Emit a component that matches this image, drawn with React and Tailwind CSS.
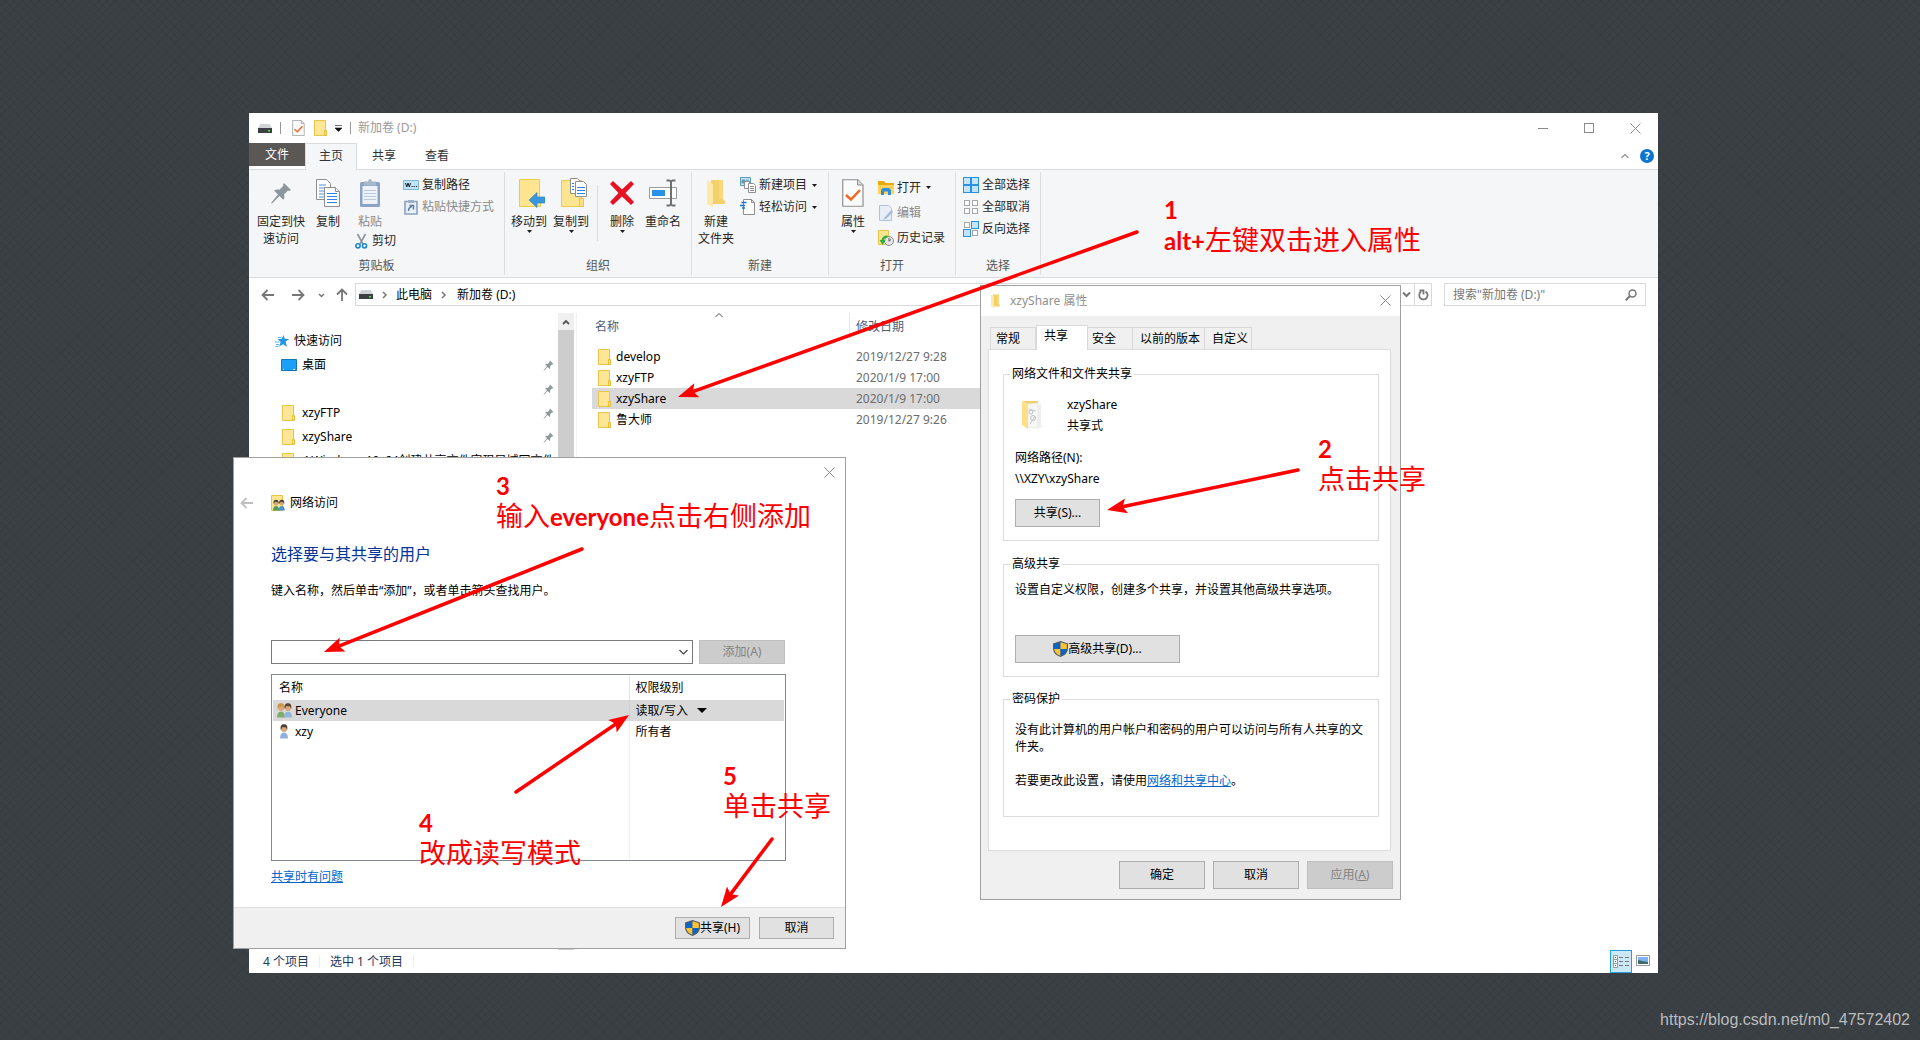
import React from "react";

/* ---------- icons ---------- */

const Folder = ({ size = 16 }) => (
  <svg width={size} height={size} viewBox="0 0 16 16" className="shrink-0">
    <path d="M1.5.5h11v11l1 .5v3.5h-12z" fill="#ffe694" stroke="#e8c54a" />
    <path d="M11.5 15.5v-5h2v5z" fill="#ffe08a" stroke="#e8bf3a" />
  </svg>
);

const OpenFolder = ({ className }) => (
  <svg viewBox="0 0 20 28" className={className}>
    <path d="M5 1h12v20l2 1v3H5z" fill="#f5cf6b" />
    <path d="M13 1h4v19h-4z" fill="#f9d87c" />
    <path d="M1 1l6 4v23l-6-3z" fill="#ffe9a6" />
  </svg>
);

const Drive = () => (
  <svg width="14" height="9" viewBox="0 0 14 9" className="shrink-0">
    <path d="M2.5 0h9L14 4H0z" fill="#cfd3d5" />
    <path d="M0 4h14v5H0z" fill="#3c4043" />
    <path d="M10 6h2v1.500h-2z" fill="#3ce64a" />
  </svg>
);

const CheckDoc = ({ className }) => (
  <svg viewBox="0 0 22 28" className={className}>
    <path d="M.75.75h15L21 6v21.250H.75z" fill="#fbfbfb" stroke="#8f8f8f" strokeWidth="1.200" />
    <path d="M15.500.750V6H21" fill="#ddd" stroke="#8f8f8f" />
    <path d="M4 16l5 4.500L18 11" fill="none" stroke="#f26522" strokeWidth="2.400" />
  </svg>
);

const Pin = ({ size = 22 }) => (
  <svg width={size} height={size} viewBox="0 0 22 22" className="shrink-0">
    <path d="M14 1l7 7-2 1-1-.5-4 4c.8 2 .5 4-.8 5.300L9.500 14 2 21.500 1 21l7-8.500L4 8.600c1.500-1.200 3.500-1.500 5.400-.8l4-4L13 2.800z" fill="#8c979d" />
  </svg>
);

const CopyIcon = () => (
  <svg width="26" height="30" viewBox="0 0 26 30">
    <path d="M1.500 1.500h10l4 4v16h-14z" fill="#fff" stroke="#8f8f8f" />
    <path d="M4 7h7M4 10h7M4 13h7M4 16h7M4 19h5" stroke="#4a90e2" />
    <path d="M9.500 9.500h11l4 4v15h-15z" fill="#fff" stroke="#8f8f8f" />
    <path d="M20.500 9.500v4h4" fill="#eee" stroke="#8f8f8f" />
    <path d="M12 15.500h10M12 18.500h10M12 21.500h10M12 24.500h10" stroke="#2f80ed" />
  </svg>
);

const PasteIcon = () => (
  <svg width="22" height="30" viewBox="0 0 22 30">
    <rect x="1" y="4" width="20" height="25" rx="1.500" fill="#8ba3c7" />
    <path d="M3.500 8h15v18h-15z" fill="#eef3fa" />
    <path d="M5 12.500h12M5 15.500h12M5 18.500h12M5 21.500h12" stroke="#b9c9df" />
    <path d="M5 3.500h4C9.300 0 12.700 0 13 3.500h4v4H5z" fill="#a9b8cc" />
  </svg>
);

const PathIcon = () => (
  <svg width="16" height="10" viewBox="0 0 16 10">
    <path d="M.5.5h15v9H.5z" fill="#bfe3f8" stroke="#7fb4d2" />
    <path d="M2.500 3l1.300 4L5 3l1.300 4L7.500 3" fill="none" stroke="#223" />
    <path d="M8.500 6.500h1.200M10.700 6.500h1.200M12.900 6.500h1.200" stroke="#223" />
  </svg>
);

const PasteLinkIcon = () => (
  <svg width="14" height="16" viewBox="0 0 14 16">
    <path d="M1 2.500h12V15H1z" fill="#e9f0f8" stroke="#8aa0bd" strokeWidth="1.600" />
    <path d="M4 1h6v3H4z" fill="#9db0c9" />
    <path d="M4.500 12c0-3 1-4 3.500-4.500M5.500 6.500h4v4" fill="none" stroke="#5c7ba6" strokeWidth="1.500" />
  </svg>
);

const CutIcon = () => (
  <svg width="13" height="16" viewBox="0 0 13 16">
    <path d="M2.500 1l5.500 10M10.500 1L5 11" stroke="#8a949c" strokeWidth="1.600" />
    <circle cx="3" cy="12.800" r="2.100" fill="none" stroke="#1e88c9" strokeWidth="1.600" />
    <circle cx="9.500" cy="12.800" r="2.100" fill="none" stroke="#1e88c9" strokeWidth="1.600" />
  </svg>
);

const MoveToIcon = () => (
  <svg width="32" height="30" viewBox="-5 0 32 30">
    <path d="M1.500 1.500h20v22l1 1v4h-21z" fill="#ffe58f" stroke="#ecc94f" />
    <path d="M11 22l8-7.500v4.500h8v6h-8v4.500z" fill="#3a96dd" stroke="#2b7fc2" strokeWidth=".6" />
  </svg>
);

const CopyToIcon = () => (
  <svg width="32" height="30" viewBox="-5 0 32 30">
    <path d="M1.500 2.500h20v20l2 1v5h-22z" fill="#ffe58f" stroke="#ecc94f" />
    <path d="M19.500 28.500v-8h4v8z" fill="#ffdf7c" stroke="#ecc04a" />
    <path d="M10.500.5h7l3 3v12h-10z" fill="#fff" stroke="#8f8f8f" />
    <path d="M15.500 3.500h8l3 3v12h-11z" fill="#fff" stroke="#8f8f8f" />
    <path d="M17 9.500h8M17 12.500h8M17 15.500h8M12 5.500h2M12 8.500h2M12 11.500h2" stroke="#2f80ed" />
  </svg>
);

const DeleteIcon = () => (
  <svg width="26" height="26" viewBox="0 0 26 26">
    <path d="M4 1l9 8.500L22 1l3 3-8.500 9L25 22l-3 3-9-8.500L4 25l-3-3 8.500-9L1 4z" fill="#e81123" />
  </svg>
);

const RenameIcon = () => (
  <svg width="30" height="28" viewBox="0 0 30 28">
    <path d="M1.500 8.500h27v11h-27z" fill="#fff" stroke="#9a9a9a" />
    <path d="M4 11h13v6H4z" fill="#2b90e8" />
    <path d="M18.500 1.500h3l1.500 1 1.500-1h3M23 2v24M18.500 26.500h3l1.500-1 1.500 1h3" fill="none" stroke="#707070" strokeWidth="2" />
  </svg>
);

const NewItemIcon = () => (
  <svg width="16" height="16" viewBox="0 0 16 16">
    <path d="M.5.5h10v8H.5z" fill="#c5e6f5" stroke="#5c9ab8" />
    <path d="M2 3h3v3H2zM6 3h3" fill="#5c9ab8" stroke="#5c9ab8" />
    <path d="M4.500 4.500h5v7h-5z" fill="#fff" stroke="#8f8f8f" />
    <path d="M8.500 6.500h5l2 2v7h-7z" fill="#fff" stroke="#8f8f8f" />
    <path d="M10 9.500h4M10 11.500h4M10 13.500h4" stroke="#8f8f8f" />
  </svg>
);

const EasyAccessIcon = () => (
  <svg width="16" height="16" viewBox="0 0 16 16">
    <path d="M3.500.5h8l3 3v12h-11z" fill="#fff" stroke="#8f8f8f" />
    <path d="M11.500.5v3h3" fill="none" stroke="#8f8f8f" />
    <path d="M1.500 3.500h5M0 6.500h5M2 9h3" stroke="#1d6fb8" strokeWidth="1.300" />
  </svg>
);

const OpenIcon = () => (
  <svg width="16" height="14" viewBox="0 0 16 14">
    <path d="M0 0h6l1.500 2H16v11H0z" fill="#e8a90c" />
    <path d="M0 4h16v9H0z" fill="#ffd35a" />
    <path d="M3 14V9l2-2h6l2 2v5h-3v-3.500H6V14z" fill="#2f8fdd" />
  </svg>
);

const EditIcon = () => (
  <svg width="14" height="16" viewBox="0 0 14 16">
    <path d="M.5.5h9l3 3v12H.5z" fill="#e8eef8" stroke="#b2c1dc" />
    <path d="M12.500 5L6 12l-2 3 3.500-1.500L14 7z" fill="#a8b9d8" />
  </svg>
);

const HistoryIcon = () => (
  <svg width="16" height="16" viewBox="0 0 16 16">
    <path d="M.5.5h10v14H.5z" fill="#ffe58f" stroke="#e8c54a" />
    <circle cx="11" cy="11" r="4.500" fill="#e6e6e6" stroke="#8b8b8b" />
    <path d="M11 8v3.200l2-1.700" fill="none" stroke="#555" />
    <path d="M9.500 6.500C6 6.500 4.500 8.500 4.500 11" fill="none" stroke="#2fae3c" strokeWidth="2" />
    <path d="M1.500 10h6l-3 5z" fill="#2fae3c" />
  </svg>
);

const SelectIcon = ({ on }) => (
  <svg width="16" height="16" viewBox="0 0 16 16">
    {[[0.5, 0.5], [8.5, 0.5], [0.5, 8.5], [8.5, 8.5]].map(([x, y], i) =>
      on[i] ? (
        <rect key={i} x={x} y={y} width="7" height="7" fill="#c3e4fb" stroke="#2b90e0" />
      ) : (
        <rect key={i} x={x + 1} y={y + 1} width="5" height="5" fill="#fff" stroke="#a6a6a6" />
      )
    )}
  </svg>
);

const Star = () => (
  <svg width="14" height="14" viewBox="0 0 14 14" className="shrink-0">
    <path d="M8.500 1l1.200 3.800 4.300.2-3.400 2.700 1.400 5L8 10.200l-4 2.400 1.700-4.500L2.500 5.200l4.300-.4z" fill="#2196e3" />
    <path d="M3 3.500h3M0 8h4.500M1 10.500h3M.5 12.500h3" stroke="#56b4ef" />
  </svg>
);

const Desktop = () => (
  <svg width="16" height="12" viewBox="0 0 16 12" className="shrink-0">
    <path d="M.5.5h15v11H.5z" fill="#1aa0fb" stroke="#1273b5" />
    <path d="M2 10.500h1M12 10.500h2" stroke="#fff" />
  </svg>
);

const Shield = () => (
  <svg width="15" height="16" viewBox="0 0 15 16" className="shrink-0">
    <path d="M7.500 0L15 2.500V7c0 4.500-3 7.500-7.500 9C3 14.500 0 11.500 0 7V2.500z" fill="#555c63" />
    <path d="M7.500 1.300V8H1.200V3.300z" fill="#0b66c3" />
    <path d="M7.500 1.300V8h6.300V3.300z" fill="#ffc233" />
    <path d="M7.500 8v6.800C4 13.500 1.500 11.500 1.200 8z" fill="#ffc233" />
    <path d="M7.500 8v6.800C11 13.500 13.500 11.500 13.800 8z" fill="#0b66c3" />
  </svg>
);

const Person = ({ x = 0, hair, body }) => (
  <g transform={`translate(${x} 0)`}>
    <path d="M0 14.500c0-4 1.500-6 4-6s4 2 4 6z" fill={body} />
    <circle cx="4" cy="5" r="3" fill="#dba67a" />
    <path d="M.8 6C0 2 1.500.3 4 .3S8 2 7.200 6L6 3.500 2.500 3z" fill={hair} />
  </g>
);

const Users = () => (
  <svg width="16" height="15" viewBox="0 0 16 15" className="shrink-0">
    <Person hair="#c9963c" body="#7fae6a" />
    <Person x={7} hair="#5d4630" body="#8fb7e0" />
  </svg>
);

const User = () => (
  <svg width="8" height="15" viewBox="0 0 8 15" className="shrink-0">
    <Person hair="#4b3f36" body="#8fb0da" />
  </svg>
);

const ShareFolder = () => (
  <svg width="14" height="16" viewBox="0 0 14 16" className="shrink-0">
    <path d="M.5.500h11v15H.5z" fill="#ffe58f" stroke="#e8c54a" />
    <g transform="translate(2 4.500) scale(.76)">
      <Person hair="#3f4a44" body="#4f9a5e" />
      <Person x={7.500} hair="#4b3f36" body="#4a90d9" />
    </g>
  </svg>
);

const BigShareFolder = () => (
  <svg width="24" height="30" viewBox="0 0 24 30" className="shrink-0">
    <path d="M1 1h16v4h-9z" fill="#f3cf6e" />
    <path d="M6 4l11-1v25l-11-1z" fill="#f7f7f5" stroke="#e0e0de" strokeWidth=".6" />
    <path d="M16 5l4-1v22l3 1-7 1z" fill="#eeeeec" />
    <circle cx="10" cy="12" r="2" fill="none" stroke="#b7c0c8" />
    <circle cx="12" cy="18" r="2.500" fill="none" stroke="#b7c0c8" />
    <path d="M8 9l7 2M9 24l5-8" stroke="#c3cad0" />
    <path d="M1 1l6 4v24l-6-4z" fill="#ffdf85" />
  </svg>
);

const Caret = ({ className = "" }) => (
  <svg width="5" height="3" viewBox="0 0 5 3" className={className}>
    <path d="M0 0h5L2.500 3z" fill="#1a1a1a" />
  </svg>
);

const Chevron = ({ d, w = 8, h = 8, color = "#777", sw = 1.5 }) => (
  <svg width={w} height={h} viewBox={`0 0 ${w} ${h}`} className="shrink-0">
    <path d={d} fill="none" stroke={color} strokeWidth={sw} />
  </svg>
);

const BackArrow = ({ color = "#777", flip = "" }) => (
  <svg width="14" height="12" viewBox="0 0 14 12" className={flip}>
    <path d="M13 6H1.500M6.500 1l-5 5 5 5" fill="none" stroke={color} strokeWidth="1.800" />
  </svg>
);

const Cross = () => (
  <svg width="11" height="11" viewBox="0 0 11 11">
    <path d="M.5.5l10 10M10.500.5l-10 10" stroke="#8a8a8a" />
  </svg>
);

/* ---------- ribbon ---------- */

const BigButton = ({ icon, lines, caret, className = "" }) => (
  <button className={`flex flex-col items-center leading-[17px] ${className}`}>
    <span className="mb-1 flex h-8 items-center justify-center">{icon}</span>
    {lines.map((line) => (
      <span key={line}>{line}</span>
    ))}
    {caret && <Caret />}
  </button>
);

const SmallButton = ({ icon, text, caret, className = "h-[22px]" }) => (
  <button className={`flex items-center gap-[3px] whitespace-nowrap ${className}`}>
    <span className="flex w-4 justify-center">{icon}</span>
    {text}
    {caret && <Caret className="ml-[2px]" />}
  </button>
);

const Group = ({ label, className, children }) => (
  <div className={`my-[2px] flex shrink-0 flex-col border-r border-[#dcdddf] ${className}`}>
    <div className="flex flex-1 items-start pt-[5px] pl-1">{children}</div>
    <div className="h-[18px] text-center leading-[18px] text-[#555]">{label}</div>
  </div>
);

const Ribbon = () => (
  <div className="flex h-[109px] border-y border-[#dadbdc] bg-[#f5f6f7] text-[#262626]">
    <Group label="剪贴板" className="w-64">
      <BigButton icon={<Pin />} lines={["固定到快", "速访问"]} className="w-14" />
      <BigButton icon={<CopyIcon />} lines={["复制"]} className="w-[38px]" />
      <div className="flex w-[52px] flex-col items-start">
        <BigButton icon={<PasteIcon />} lines={["粘贴"]} className="w-[46px] text-[#8a8a8a]" />
        <SmallButton icon={<CutIcon />} text="剪切" className="ml-[6px] h-[22px]" />
      </div>
      <div className="-mt-[3px] pl-1">
        <SmallButton icon={<PathIcon />} text="复制路径" />
        <SmallButton icon={<PasteLinkIcon />} text="粘贴快捷方式" className="h-[22px] text-[#8a8a8a]" />
      </div>
    </Group>
    <Group label="组织" className="w-[187px]">
      <BigButton icon={<MoveToIcon />} lines={["移动到"]} caret className="w-[40px]" />
      <BigButton icon={<CopyToIcon />} lines={["复制到"]} caret className="w-[44px]" />
      <div className="mx-1 mt-2 h-14 w-px bg-[#dcdddf]" />
      <BigButton icon={<DeleteIcon />} lines={["删除"]} caret className="w-[40px]" />
      <BigButton icon={<RenameIcon />} lines={["重命名"]} className="w-[42px]" />
    </Group>
    <Group label="新建" className="w-[137px]">
      <BigButton icon={<OpenFolder className="h-7 w-5" />} lines={["新建", "文件夹"]} className="w-[40px]" />
      <div className="-mt-[3px] pl-1">
        <SmallButton icon={<NewItemIcon />} text="新建项目" caret />
        <SmallButton icon={<EasyAccessIcon />} text="轻松访问" caret />
      </div>
    </Group>
    <Group label="打开" className="w-[127px]">
      <BigButton icon={<CheckDoc className="h-7 w-[22px]" />} lines={["属性"]} caret className="w-10" />
      <div className="-mt-[2px] pl-[5px]">
        <SmallButton icon={<OpenIcon />} text="打开" caret className="h-[25px]" />
        <SmallButton icon={<EditIcon />} text="编辑" className="h-[25px] text-[#8a8a8a]" />
        <SmallButton icon={<HistoryIcon />} text="历史记录" className="h-[25px]" />
      </div>
    </Group>
    <Group label="选择" className="w-[85px]">
      <div className="-mt-[3px] pl-[3px]">
        <SmallButton icon={<SelectIcon on={[1, 1, 1, 1]} />} text="全部选择" />
        <SmallButton icon={<SelectIcon on={[0, 0, 0, 0]} />} text="全部取消" />
        <SmallButton icon={<SelectIcon on={[0, 1, 1, 0]} />} text="反向选择" />
      </div>
    </Group>
  </div>
);

/* ---------- explorer window ---------- */

const files = [
  { name: "develop", date: "2019/12/27 9:28" },
  { name: "xzyFTP", date: "2020/1/9 17:00" },
  { name: "xzyShare", date: "2020/1/9 17:00", selected: true },
  { name: "鲁大师", date: "2019/12/27 9:26" },
];

const quickAccess = [
  { name: "桌面", icon: <Desktop />, pinned: true },
  { name: "", icon: null, pinned: true },
  { name: "xzyFTP", icon: <Folder />, pinned: true },
  { name: "xzyShare", icon: <Folder />, pinned: true },
  { name: "4.Windows 10_64创建共享文件实现局域网文件", icon: <Folder /> },
];

const TitleBar = () => (
  <div className="flex h-[30px] items-center pl-[9px]">
    <Drive />
    <span className="ml-2 h-3 w-px bg-[#999]" />
    <span className="ml-[11px]"><CheckDoc className="h-4 w-[13px]" /></span>
    <span className="ml-2"><Folder /></span>
    <svg width="7" height="7" viewBox="0 0 7 7" className="ml-[6px]">
      <path d="M0 .5h7M0 3h7L3.500 6.500z" fill="#111" stroke="#111" strokeWidth=".6" />
    </svg>
    <span className="ml-2 h-3 w-px bg-[#999]" />
    <span className="ml-[7px] text-[#999]">新加卷 (D:)</span>
    <div className="ml-auto flex">
      <button aria-label="最小化" className="flex h-7 w-[46px] items-center justify-center">
        <span className="h-px w-[10px] bg-[#8a8a8a]" />
      </button>
      <button aria-label="最大化" className="flex h-7 w-[46px] items-center justify-center">
        <span className="size-[10px] border border-[#8a8a8a]" />
      </button>
      <button aria-label="关闭" className="flex h-7 w-[46px] items-center justify-center"><Cross /></button>
    </div>
  </div>
);

const MenuTabs = () => (
  <div className="-mb-px flex h-[27px] items-start text-[#333]">
    <button className="h-[23px] w-14 bg-[#5a5755] text-white">文件</button>
    <button className="relative h-[27px] w-[52px] border border-b-0 border-[#dadbdc] bg-[#f5f6f7] pb-[2px]">主页</button>
    <button className="h-[25px] w-[54px]">共享</button>
    <button className="h-[25px] w-[52px]">查看</button>
    <div className="ml-auto flex h-[25px] items-center gap-[11px] pr-1">
      <Chevron d="M.5 5l3.500-3.500L7.500 5" h={6} color="#999" sw={1.3} />
      <button aria-label="帮助" className="size-[14px] rounded-full bg-[#0b74d1] text-center text-[11px] leading-[14px] font-bold text-white">?</button>
    </div>
  </div>
);

const AddressBar = () => (
  <div className="flex h-[35px] items-start pt-[5px] pr-3">
    <div className="flex h-6 items-center pl-3">
      <button aria-label="后退"><BackArrow /></button>
      <button aria-label="前进" className="ml-4"><BackArrow flip="rotate-180" /></button>
      <button aria-label="最近" className="ml-[13px]"><Chevron d="M1 1l2.500 2.500L6 1" w={7} h={5} /></button>
      <button aria-label="向上" className="ml-[10px]"><BackArrow flip="rotate-90" /></button>
    </div>
    <div className="ml-[6px] flex h-[23px] flex-1 items-center border border-[#d9d9d9] pl-[3px]">
      <Drive />
      <span className="ml-2"><Chevron d="M2 1l3 3-3 3" /></span>
      <span className="ml-[7px]">此电脑</span>
      <span className="ml-2"><Chevron d="M2 1l3 3-3 3" /></span>
      <span className="ml-[9px]">新加卷 (D:)</span>
      <button aria-label="展开" className="mr-[3px] ml-auto"><Chevron d="M1 1.500L4.500 5 8 1.500" w={9} h={7} sw={2} /></button>
      <button aria-label="刷新" className="flex h-full w-[17px] items-center justify-center border-l border-[#d9d9d9]">
        <svg width="11" height="12" viewBox="0 0 11 12">
          <path d="M7.500 2.600A4.200 4.200 0 1 1 3 2.800M1.500 1.500h4v4" fill="none" stroke="#777" strokeWidth="1.800" />
        </svg>
      </button>
    </div>
    <label className="ml-3 flex h-[23px] w-[202px] items-center border border-[#d9d9d9] px-2">
      <input aria-label="搜索" placeholder={'搜索"新加卷 (D:)"'} className="min-w-0 flex-1 outline-none placeholder:text-[#767676]" />
      <svg width="12" height="12" viewBox="0 0 12 12">
        <circle cx="7.500" cy="4.500" r="3.500" fill="none" stroke="#777" strokeWidth="1.500" />
        <path d="M5 7L.7 11.300" stroke="#777" strokeWidth="2" />
      </svg>
    </label>
  </div>
);

const Sidebar = () => (
  <div className="flex w-[328px] shrink-0 border-r border-[#f3f3f3]">
    <div className="w-[309px] pt-4">
      <div className="flex h-6 items-center gap-[5px] pl-[26px]">
        <Star />
        快速访问
      </div>
      {quickAccess.map((item, i) => (
        <div key={i} className="flex h-6 items-center gap-[5px] pl-8">
          <span className="w-4 shrink-0">{item.icon}</span>
          <span className="flex-1 overflow-hidden whitespace-nowrap">{item.name}</span>
          {item.pinned && <span className="mr-1"><Pin size={11} /></span>}
        </div>
      ))}
    </div>
    <div className="flex w-4 flex-col bg-[#cdcdcd]">
      <div className="flex h-[17px] items-center justify-center bg-[#f0f0f0]">
        <Chevron d="M1 5l3-3 3 3" h={6} color="#555" sw={1.8} />
      </div>
    </div>
  </div>
);

const FileList = () => (
  <div className="flex-1 pl-[15px]">
    <table className="w-[700px] table-fixed text-left">
      <thead className="text-[#4c607a]">
        <tr className="h-[33px]">
          <th className="relative w-[258px] align-top font-normal">
            <span className="absolute top-0 left-[123px]"><Chevron d="M.5 4l3.500-3.500L7.500 4" h={5} color="#555" sw={1} /></span>
            <div className="h-[26px] border-r border-[#e5e5e5] pl-[3px] leading-7">名称</div>
          </th>
          <th className="align-top font-normal">
            <div className="h-[26px] pl-[6px] leading-7">修改日期</div>
          </th>
        </tr>
      </thead>
      <tbody>
        {files.map((file) => (
          <tr key={file.name} className={file.selected ? "h-[21px] bg-[#d9d9d9]" : "h-[21px]"}>
            <td className="p-0">
              <span className="flex items-center gap-[3px] pl-[5px]">
                <Folder />
                <span className="leading-[21px]">{file.name}</span>
              </span>
            </td>
            <td className="p-0 pl-[6px] text-[#6d6d6d]">{file.date}</td>
          </tr>
        ))}
      </tbody>
    </table>
  </div>
);

const StatusBar = () => (
  <div className="flex h-[23px] items-center pl-[14px] text-[#1e395b]">
    <span>4 个项目</span>
    <span className="mx-[10px] h-3 w-px bg-[#eee]" />
    <span>选中 1 个项目</span>
    <span className="mx-[10px] h-3 w-px bg-[#eee]" />
    <button aria-label="详细信息" className="ml-auto flex h-[23px] w-[22px] items-center justify-center border border-[#26a0da] bg-[#cbe8f6]">
      <svg width="16" height="13" viewBox="0 0 16 13">
        <path d="M.5.5h4v12h-4zM.5 4.500h4M.5 8.500h4" fill="#fff" stroke="#999" />
        <path d="M6 2.500h4M12 2.500h4M6 6.500h4M12 6.500h4M6 10.500h4M12 10.500h4" stroke="#777" />
        <path d="M2 2h1v1H2zM2 6h1v1H2z" fill="#357" />
        <path d="M2 10h1v1H2z" fill="#c33" />
      </svg>
    </button>
    <button aria-label="大图标" className="mr-2 ml-1 pb-[2px]">
      <svg width="14" height="11" viewBox="0 0 14 11">
        <path d="M.5.5h13v10H.5z" fill="#fff" stroke="#999" />
        <path d="M2 2h10v7H2z" fill="#7fb2f0" />
        <path d="M2 5l4 1 6 1v2H2z" fill="#3c6b6b" />
      </svg>
    </button>
  </div>
);

const Explorer = () => (
  <div className="flex min-w-0 flex-1 flex-col bg-white">
    <TitleBar />
    <MenuTabs />
    <Ribbon />
    <AddressBar />
    <div className="flex flex-1">
      <Sidebar />
      <FileList />
    </div>
    <StatusBar />
  </div>
);

/* ---------- dialogs ---------- */

const Button = ({ className = "", disabled, children }) => (
  <button
    disabled={disabled}
    className={`flex items-center justify-center border border-[#adadad] bg-[#e1e1e1] disabled:border-[#bfbfbf] disabled:bg-[#ccc] disabled:text-[#838383] ${className}`}
  >
    {children}
  </button>
);

const Section = ({ title, className, children }) => (
  <fieldset className={`border border-[#dcdcdc] pr-2 pl-[11px] ${className}`}>
    <legend className="-ml-[5px] px-[2px] leading-4">{title}</legend>
    {children}
  </fieldset>
);

const Tab = ({ className, children }) => (
  <button role="tab" className={`h-[22px] border-t border-r border-[#d9d9d9] bg-[#f0f0f0] text-left ${className}`}>
    {children}
  </button>
);

const PropertiesDialog = () => (
  <div role="dialog" aria-label="xzyShare 属性" className="absolute top-[285px] left-[980px] w-[421px] border border-[#a0a0a0] bg-[#f0f0f0]">
    <div className="flex h-[30px] items-center bg-white pr-[9px] pl-[9px] text-[#8f8f8f]">
      <OpenFolder className="h-[14px] w-[11px]" />
      <span className="ml-[9px]">xzyShare 属性</span>
      <button aria-label="关闭" className="ml-auto pb-[2px]"><Cross /></button>
    </div>
    <div className="pr-[9px] pl-[7px]">
      <div role="tablist" className="-mb-px flex h-[34px] items-end pb-px pl-[2px]">
        <Tab className="w-[46px] border-l pl-[5px]">常规</Tab>
        <button role="tab" aria-selected="true" className="relative -mb-px h-[25px] w-[52px] border border-b-0 border-[#d9d9d9] bg-white pb-1 pl-[7px] text-left">共享</button>
        <Tab className="w-[45px] pl-1">安全</Tab>
        <Tab className="w-[72px] pl-[7px]">以前的版本</Tab>
        <Tab className="w-[47px] pl-[7px]">自定义</Tab>
      </div>
      <div className="border border-[#dcdcdc] bg-white pt-4 pr-[11px] pb-[33px] pl-[14px]">
        <Section title="网络文件和文件夹共享" className="min-h-[175px]">
          <div className="flex items-center gap-[22px] pt-3 pl-[6px] leading-[21px]">
            <BigShareFolder />
            <div>
              <p>xzyShare</p>
              <p>共享式</p>
            </div>
          </div>
          <p className="mt-[11px] leading-[21px]">网络路径(N):</p>
          <p className="leading-[21px]">\\XZY\xzyShare</p>
          <Button className="mt-[10px] h-7 w-[85px]">共享(S)...</Button>
        </Section>
        <Section title="高级共享" className="mt-[15px] min-h-[121px]">
          <p className="pt-[9px] leading-[18px]">设置自定义权限，创建多个共享，并设置其他高级共享选项。</p>
          <Button className="mt-9 h-7 w-[165px]"><Shield />高级共享(D)...</Button>
        </Section>
        <Section title="密码保护" className="mt-[14px] min-h-[126px]">
          <p className="pt-[14px] leading-[17px]">没有此计算机的用户帐户和密码的用户可以访问与所有人共享的文件夹。</p>
          <p className="mt-[17px] leading-[17px]">
            若要更改此设置，请使用<a href="#" className="text-[#0066cc] underline">网络和共享中心</a>。
          </p>
        </Section>
      </div>
    </div>
    <div className="flex justify-end gap-2 pt-[10px] pr-[7px] pb-[10px]">
      <Button className="h-7 w-[86px]">确定</Button>
      <Button className="h-7 w-[86px]">取消</Button>
      <Button className="h-7 w-[86px]" disabled>应用(<u>A</u>)</Button>
    </div>
  </div>
);

const ShareDialog = () => (
  <div role="dialog" aria-label="网络访问" className="absolute top-[457px] left-[233px] w-[613px] border border-[#a0a0a0] bg-white">
    <div className="flex h-[30px] items-center justify-end pr-[10px] pb-[2px]">
      <button aria-label="关闭"><Cross /></button>
    </div>
    <div className="flex h-[30px] items-center pl-[6px]">
      <button aria-label="返回"><BackArrow color="#c0c0c0" /></button>
      <span className="ml-[17px]"><ShareFolder /></span>
      <span className="ml-[5px]">网络访问</span>
    </div>
    <div className="pt-6 pr-[59px] pb-[21px] pl-[37px]">
      <h1 className="text-base leading-6 text-[#003399]">选择要与其共享的用户</h1>
      <p className="mt-4 leading-[18px]">键入名称，然后单击“添加”，或者单击箭头查找用户。</p>
      <div className="mt-10 flex items-center gap-[6px] pr-px">
        <div className="flex h-6 flex-1 items-center border border-[#7a7a7a] pr-1">
          <input aria-label="用户名" className="min-w-0 flex-1 px-1 outline-none" />
          <button aria-label="展开列表"><Chevron d="M.5 1l4 4 4-4" w={9} h={6} color="#444" sw={1.2} /></button>
        </div>
        <Button className="h-6 w-[86px]" disabled>添加(A)</Button>
      </div>
      <div className="mt-[10px] h-[187px] border border-[#828790] p-px">
        <table className="h-full w-full table-fixed text-left">
          <thead>
            <tr className="h-6">
              <th className="w-[356px] border-r border-[#e5e5e5] p-0 pl-[6px] font-normal">名称</th>
              <th className="p-0 pl-[6px] font-normal">权限级别</th>
            </tr>
          </thead>
          <tbody>
            <tr className="h-[21px] bg-[#d9d9d9]">
              <td className="border-r border-[#c9d3dc] p-0">
                <span className="flex items-center gap-[2px] pl-1"><Users />Everyone</span>
              </td>
              <td className="p-0 pl-[6px]">
                <button className="flex items-center gap-[9px]">
                  读取/写入
                  <svg width="10" height="5" viewBox="0 0 10 5"><path d="M0 0h10L5 5z" /></svg>
                </button>
              </td>
            </tr>
            <tr className="h-[21px]">
              <td className="border-r border-[#e6effa] p-0">
                <span className="flex items-center gap-[7px] pl-[7px]"><User />xzy</span>
              </td>
              <td className="p-0 pl-[6px]">所有者</td>
            </tr>
            <tr>
              <td className="border-r border-[#e6effa]" />
              <td />
            </tr>
          </tbody>
        </table>
      </div>
      <a href="#" className="mt-[7px] block leading-[18px] text-[#0066cc] underline">共享时有问题</a>
    </div>
    <div className="flex h-[41px] items-center justify-end gap-[9px] border-t border-[#dfdfdf] bg-[#f0f0f0] pr-[11px]">
      <Button className="h-[22px] w-[75px]"><Shield />共享(H)</Button>
      <Button className="h-[22px] w-[75px]">取消</Button>
    </div>
  </div>
);

/* ---------- red notes and arrows ---------- */

const arrows = [
  { from: [1137, 232], to: [678, 397] },
  { from: [1298, 470], to: [1107, 510] },
  { from: [582, 549], to: [324, 652] },
  { from: [516, 792], to: [629, 715] },
  { from: [772, 839], to: [721, 907] },
];

const Arrows = () => (
  <svg className="pointer-events-none absolute inset-0 h-full w-full">
    {arrows.map(({ from, to }, i) => {
      const dx = to[0] - from[0];
      const dy = to[1] - from[1];
      const len = Math.hypot(dx, dy);
      const angle = (Math.atan2(dy, dx) * 180) / Math.PI;
      return (
        <g key={i} transform={`translate(${to[0]} ${to[1]}) rotate(${angle})`}>
          <path d={`M${-len} 0H-12`} stroke="#f00" strokeWidth="3.500" strokeLinecap="round" />
          <path d="M0 0L-20-7.500-16 0-20 7.500z" fill="#f00" />
        </g>
      );
    })}
  </svg>
);

const Note = ({ n, className, children }) => (
  <div className={`absolute text-[27px] leading-[30px] whitespace-nowrap text-[#f00] ${className}`}>
    <p className="text-[24px] font-bold [font-family:Lato,'Noto_Sans_CJK_SC',sans-serif]">{n}</p>
    <p>{children}</p>
  </div>
);

const Latin = ({ children }) => (
  <span className="text-[24px] font-bold [font-family:Lato,sans-serif]">{children}</span>
);

const App = () => {
  return (
    <div
      lang="zh-CN"
      className="relative flex min-h-screen overflow-hidden bg-[#3b4044] bg-[repeating-linear-gradient(45deg,rgba(0,0,0,0.05)_0_1px,transparent_1px_6px),repeating-linear-gradient(-45deg,rgba(0,0,0,0.05)_0_1px,transparent_1px_6px)] pt-[113px] pr-[262px] pb-[67px] pl-[249px] text-xs text-black [font-family:'Noto_Sans','Noto_Sans_CJK_SC',sans-serif]"
    >
      <Explorer />
      <PropertiesDialog />
      <ShareDialog />

      <Arrows />
      <Note n="1" className="top-[195px] left-[1164px]"><Latin>alt+</Latin>左键双击进入属性</Note>
      <Note n="2" className="top-[434px] left-[1318px]">点击共享</Note>
      <Note n="3" className="top-[471px] left-[496px]">输入<Latin>everyone</Latin>点击右侧添加</Note>
      <Note n="4" className="top-[808px] left-[419px]">改成读写模式</Note>
      <Note n="5" className="top-[761px] left-[723px]">单击共享</Note>

      <a href="https://blog.csdn.net/m0_47572402" className="absolute right-[10px] bottom-2 text-base leading-6 text-[#b9bcbe] [font-family:'Liberation_Sans',sans-serif]">
        https://blog.csdn.net/m0_47572402
      </a>
    </div>
  );
};

export default App;
